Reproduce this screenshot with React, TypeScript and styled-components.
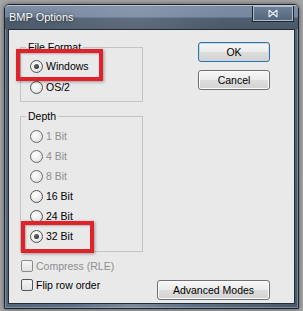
import React from "react";
import styled, { createGlobalStyle } from "styled-components";

const GlobalStyle = createGlobalStyle`
  html, body {
    margin: 0;
    padding: 0;
  }
  body {
    width: 303px;
    height: 311px;
    overflow: hidden;
    background: #a6a6a6;
    font-family: "Liberation Sans", Arial, sans-serif;
    font-size: 10.5px;
    color: #000;
  }
`;

const Stage = styled.div`
  padding: 4px 0 0 4px;
`;

const Window = styled.div`
  width: 295px;
  height: 305px;
  box-sizing: border-box;
  border: 1px solid #1c242e;
  border-radius: 5px 5px 0 0;
  background: linear-gradient(100deg, #4d5e70 0%, #5d6f84 35%, #7a8a9d 52%, #5d6f83 70%, #4a5a6b 100%);
  box-shadow: 0 0 5px rgba(0, 0, 0, 0.5), inset 0 0 0 1px rgba(200, 215, 230, 0.35);
  display: flex;
  flex-direction: column;
`;

const TitleBar = styled.div`
  height: 24px;
  display: flex;
  align-items: flex-start;
  justify-content: space-between;
  padding: 0 4px 0 4px;
  border-radius: 4px 4px 0 0;
  border-top: 1px solid #b9c4d0;
  box-sizing: border-box;
  background:
    linear-gradient(90deg, rgba(255, 255, 255, 0) 0%, rgba(255, 255, 255, 0.1) 45%, rgba(255, 255, 255, 0) 75%),
    linear-gradient(to bottom, #7b8ca1 0%, #7688a0 48%, #4f5e70 52%, #4a5869 100%);
`;

const Title = styled.span`
  align-self: center;
  margin-top: -1px;
  color: #fff;
  font-size: 11px;
  text-shadow: 0 0 4px rgba(0, 0, 0, 0.6), 0 0 1px rgba(0, 0, 0, 0.5);
`;

const CloseButton = styled.div`
  width: 42px;
  height: 16px;
  box-sizing: border-box;
  border: 1px solid #1d2631;
  border-top: none;
  background: linear-gradient(to bottom, #6f8195, #53657a);
  box-shadow: inset 0 0 0 1px #aebbc9;
  display: flex;
  align-items: center;
  justify-content: center;
`;

const Client = styled.div`
  flex: 1;
  margin: 0 3px 4px;
  border: 1px solid #232c37;
  background: #e9e9e9;
  display: flex;
  padding: 10px 24px 0 11px;
`;

const LeftColumn = styled.div`
  width: 123px;
  display: flex;
  flex-direction: column;
`;

const RightColumn = styled.div`
  flex: 1;
  display: flex;
  flex-direction: column;
  align-items: flex-end;
  padding-top: 2px;
`;

const Group = styled.fieldset<{ $top?: number; $pt: number; $pb: number }>`
  margin: ${(p) => p.$top ?? 0}px 0 0;
  padding: ${(p) => p.$pt}px 4px ${(p) => p.$pb}px 5px;
  border: 1px solid #c4c4c4;
  min-width: 0;
`;

const Legend = styled.legend`
  padding: 0 2px;
  line-height: 14px;
  font-size: 10.5px;
`;

const OptionList = styled.div<{ $gap: number }>`
  display: flex;
  flex-direction: column;
  gap: ${(p) => p.$gap}px;
`;

const OptionRow = styled.div<{ $disabled?: boolean }>`
  position: relative;
  height: 20px;
  display: flex;
  align-items: center;
  gap: 3px;
  margin-left: 4px;
  color: ${(p) => (p.$disabled ? "#8e8e8e" : "#000")};
  width: max-content;
`;

const RadioMark = styled.span<{ $checked?: boolean; $disabled?: boolean }>`
  width: 13px;
  height: 13px;
  box-sizing: border-box;
  border-radius: 50%;
  border: 1px solid ${(p) => (p.$disabled ? "#6a6a6a" : "#555")};
  background: radial-gradient(circle at 40% 35%, #ffffff 0%, #f0f0f0 45%, #d6d6d6 100%);
  display: flex;
  align-items: center;
  justify-content: center;

  &::after {
    content: "";
    display: ${(p) => (p.$checked ? "block" : "none")};
    width: 5px;
    height: 5px;
    border-radius: 50%;
    background: radial-gradient(circle at 40% 35%, #6a6a6a, #262626);
  }
`;

const CheckRow = styled.div<{ $disabled?: boolean }>`
  height: 19px;
  display: flex;
  align-items: center;
  gap: 3px;
  margin-left: 1px;
  color: ${(p) => (p.$disabled ? "#8e8e8e" : "#000")};
`;

const CheckMark = styled.span<{ $disabled?: boolean }>`
  width: 12px;
  height: 12px;
  box-sizing: border-box;
  border-radius: 2px;
  border: 1px solid ${(p) => (p.$disabled ? "#8a8a8a" : "#555")};
  background: linear-gradient(to bottom, #f4f4f4, #e2e2e2);
`;

const Highlight = styled.span<{ $left: number; $top: number; $width: number }>`
  position: absolute;
  left: ${(p) => p.$left}px;
  top: ${(p) => p.$top}px;
  width: ${(p) => p.$width}px;
  height: 32px;
  box-sizing: border-box;
  border: 4px solid #e0222a;
  box-shadow: 1px 1px 3px rgba(0, 0, 0, 0.35), inset 1px 1px 2px rgba(0, 0, 0, 0.25);
  pointer-events: none;
  z-index: 1;
`;

const Button = styled.button<{ $width: number; $default?: boolean }>`
  width: ${(p) => p.$width}px;
  height: 20px;
  margin: 0;
  padding: 0;
  box-sizing: border-box;
  border: 1px solid ${(p) => (p.$default ? "#3a6f98" : "#707070")};
  border-radius: 3px;
  background: linear-gradient(to bottom, #f6f6f6 0%, #ececec 48%, #dddddd 52%, #d2d2d2 100%);
  box-shadow: inset 0 0 0 1px ${(p) => (p.$default ? "#b8dcf0" : "#fbfbfb")};
  font-family: "Liberation Sans", Arial, sans-serif;
  font-size: 10.5px;
  color: #000;
`;

const Spacer = styled.div<{ $h?: number }>`
  height: ${(p) => p.$h ?? 0}px;
  flex: ${(p) => (p.$h ? "none" : 1)};
`;

const CloseIcon = () => (
  <svg width="10" height="9" viewBox="0 0 10 9">
    <path d="M1 1V8M9 1V8M1 1L9 8M1 8L9 1" stroke="#e6edf4" strokeWidth="1.1" fill="none" />
  </svg>
);

const depths = [
  { label: "1 Bit", disabled: true },
  { label: "4 Bit", disabled: true },
  { label: "8 Bit", disabled: true },
  { label: "16 Bit" },
  { label: "24 Bit" },
  { label: "32 Bit", checked: true, marked: true },
];

export default function App() {
  return (
    <>
      <GlobalStyle />
      <Stage>
        <Window>
          <TitleBar>
            <Title>BMP Options</Title>
            <CloseButton>
              <CloseIcon />
            </CloseButton>
          </TitleBar>
          <Client>
            <LeftColumn>
              <Group $pt={2} $pb={4}>
                <Legend>File Format</Legend>
                <OptionList $gap={1}>
                  <OptionRow>
                    <Highlight $left={-14} $top={-7} $width={87} />
                    <RadioMark $checked />
                    Windows
                  </OptionRow>
                  <OptionRow>
                    <RadioMark />
                    OS/2
                  </OptionRow>
                </OptionList>
              </Group>
              <Group $top={7} $pt={3} $pb={5}>
                <Legend>Depth</Legend>
                <OptionList $gap={0}>
                  {depths.map((d) => (
                    <OptionRow key={d.label} $disabled={d.disabled}>
                      {d.marked && <Highlight $left={-9} $top={-5} $width={73} />}
                      <RadioMark $checked={d.checked} $disabled={d.disabled} />
                      {d.label}
                    </OptionRow>
                  ))}
                </OptionList>
              </Group>
              <Spacer $h={4} />
              <CheckRow $disabled>
                <CheckMark $disabled />
                Compress (RLE)
              </CheckRow>
              <CheckRow>
                <CheckMark />
                Flip row order
              </CheckRow>
            </LeftColumn>
            <RightColumn>
              <Button $width={72} $default>
                OK
              </Button>
              <Spacer $h={8} />
              <Button $width={72}>Cancel</Button>
              <Spacer />
              <Button $width={113}>Advanced Modes</Button>
              <Spacer $h={3} />
            </RightColumn>
          </Client>
        </Window>
      </Stage>
    </>
  );
}
